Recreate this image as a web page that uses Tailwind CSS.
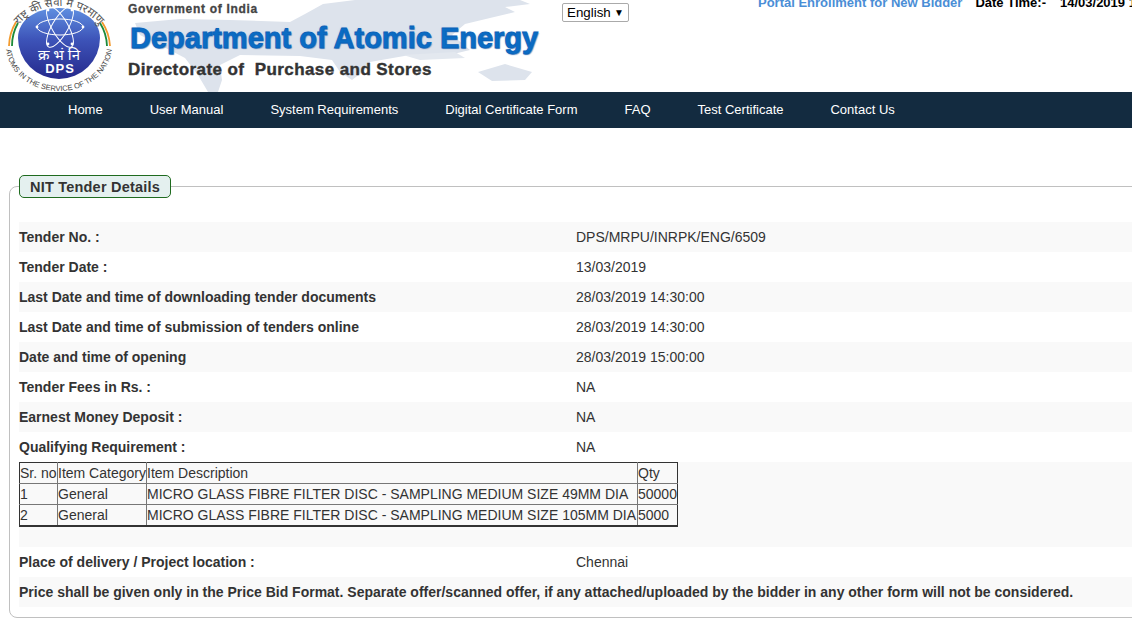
<!DOCTYPE html>
<html lang="en">
<head>
<meta charset="utf-8">
<title>NIT Tender Details</title>
<script src="https://cdn.jsdelivr.net/npm/@tailwindcss/browser@4"></script>
</head>
<body class="bg-white overflow-hidden h-[627px] w-[1132px] font-['Liberation_Sans',Arial,sans-serif] text-[14px] text-[#333]">
<header class="relative h-[92px] overflow-hidden flex items-start bg-white">
  <svg class="absolute left-[120px] top-0" width="440" height="92" viewBox="0 0 440 92" aria-hidden="true">
    <path d="M15 23 L60 19 L110 20 L170 22 L185 14 L203 4 L235 0 L400 0 L410 4 L385 7 L395 12 L370 18 L345 24 L332 35 L350 50 L325 56 L290 55 L250 62 L245 70 L232 80 L220 72 L212 60 L180 56 L120 55 L100 65 L102 80 L98 92 L88 92 L78 75 L65 58 L40 45 L20 35 Z" fill="#dde3ec"/>
    <path d="M283 55 L335 52 L345 58 L300 60 Z" fill="#e3e8ef"/>
    <path d="M358 72 L385 64 L412 72 L405 80 L372 81 Z" fill="#dde3ec"/>
  </svg>
  <svg class="relative shrink-0" width="120" height="92" viewBox="0 0 120 92">
    <defs>
      <linearGradient id="g" x1="0" y1="0" x2="0" y2="1"><stop offset="0" stop-color="#5f8fe0"/><stop offset=".45" stop-color="#3d53b8"/><stop offset="1" stop-color="#25298c"/></linearGradient>
      <path id="bot" d="M6 46 A53 45 0 0 0 112 46"/>
      <path id="top" d="M18 26 A52 52 0 0 1 100 26"/>
    </defs>
    <path d="M18 38 C18 20 36 8 59 8 C82 8 100 20 100 38 A41 41 0 0 1 18 38 Z" fill="url(#g)"/>
    <g fill="none" stroke="#fff" stroke-width="1">
      <ellipse cx="60" cy="27" rx="8" ry="23" transform="rotate(90 60 27)"/>
      <ellipse cx="60" cy="27" rx="8" ry="23" transform="rotate(30 60 27)"/>
      <ellipse cx="60" cy="27" rx="8" ry="23" transform="rotate(150 60 27)"/>
    </g>
    <g fill="#fff">
      <circle cx="37" cy="27" r="1.4"/><circle cx="83" cy="27" r="1.4"/>
      <circle cx="48" cy="44" r="1.4"/><circle cx="72" cy="44" r="1.4"/>
      <circle cx="48" cy="10" r="1.4"/><circle cx="72" cy="10" r="1.4"/>
    </g>
    <text x="59" y="60" text-anchor="middle" fill="#fff" font-size="15" font-family="'Noto Sans','DejaVu Sans',sans-serif">क्र भं नि</text>
    <text x="60" y="73" text-anchor="middle" fill="#fff" font-size="13" font-weight="700" letter-spacing="1" font-family="'Liberation Sans',sans-serif">DPS</text>
    <path d="M16 22 A48 48 0 0 0 9 46" fill="none" stroke="#f39a2d" stroke-width="1.8"/>
    <path d="M18 23 A46 46 0 0 0 12 46" fill="none" stroke="#1d8a3a" stroke-width="1.8"/>
    <path d="M102 22 A48 48 0 0 1 110 46" fill="none" stroke="#f39a2d" stroke-width="1.8"/>
    <path d="M100 23 A46 46 0 0 1 107 46" fill="none" stroke="#1d8a3a" stroke-width="1.8"/>
    <text font-size="7.5" fill="#444" font-family="'Liberation Sans',sans-serif"><textPath href="#bot" startOffset="50%" text-anchor="middle">ATOMS IN THE SERVICE OF THE NATION</textPath></text>
    <text font-size="11.5" fill="#555" font-family="'Noto Sans',sans-serif"><textPath href="#top" startOffset="50%" text-anchor="middle">राष्ट्र की सेवा में परमाणु</textPath></text>
  </svg>
  <div class="relative ml-[8px] w-[434px] shrink-0 font-bold">
    <div class="text-[12px] leading-[14px] mt-[2px] text-[#444] tracking-[0.7px] [-webkit-text-stroke:0.3px_#444]">Government of India</div>
    <div class="text-[29px] leading-[34px] mt-[5px] ml-[2px] text-[#0a6cc4] whitespace-nowrap [-webkit-text-stroke:0.8px_#0a62b8] [text-shadow:0_0_2px_#9cc0ea,1px_1px_1px_#6d8fbc]">Department of Atomic Energy</div>
    <div class="text-[17px] leading-[20px] mt-[5px] text-[#333] tracking-[0.42px] whitespace-nowrap [-webkit-text-stroke:0.4px_#333]">Directorate of&nbsp; Purchase and Stores</div>
  </div>
  <div class="relative mt-[3px] w-[67px] h-[19px] shrink-0 flex items-center justify-between pl-[4px] pr-[4px] bg-white border border-[#aaa] rounded-[2px] text-[13.33px] text-black">
    <span>English</span><span class="text-[10px] leading-none">▼</span>
  </div>
  <div class="relative ml-[129px] mt-[-4px] flex shrink-0 whitespace-nowrap font-bold text-[13px] leading-[14px] text-black">
    <span class="text-[#4a8ed6]">Portal Enrollment for New Bidder</span>
    <span class="ml-[13px]">Date Time:-</span>
    <span class="ml-[14px]">14/03/2019 1</span>
  </div>
</header>
<nav class="h-[36px] bg-[#132b40] flex items-center pl-[68px] gap-[47px] text-white text-[13px] whitespace-nowrap">
  <a>Home</a><a>User Manual</a><a>System Requirements</a><a>Digital Certificate Form</a><a>FAQ</a><a>Test Certificate</a><a>Contact Us</a>
</nav>
<main class="pt-[47px] pl-[9px]">
  <fieldset class="w-[1140px] h-[443px] border border-[#c0c0c0] rounded-[8px]">
    <legend class="ml-[9px] mr-[13px] h-[23px] w-[152px] pt-[2px] flex items-center justify-center bg-[#e4f0ef] border border-[#1f6b1f] rounded-[5px] text-[14.5px] font-bold tracking-[0.2px] text-[#333]">NIT Tender Details</legend>
    <div class="ml-[9px] mt-[24px]">
      <div class="flex h-[30px] items-center bg-[#f9f9f9]"><b class="w-[557px]">Tender No. :</b><span>DPS/MRPU/INRPK/ENG/6509</span></div>
      <div class="flex h-[30px] items-center"><b class="w-[557px]">Tender Date :</b><span>13/03/2019</span></div>
      <div class="flex h-[30px] items-center bg-[#f9f9f9]"><b class="w-[557px]">Last Date and time of downloading tender documents</b><span>28/03/2019 14:30:00</span></div>
      <div class="flex h-[30px] items-center"><b class="w-[557px]">Last Date and time of submission of tenders online</b><span>28/03/2019 14:30:00</span></div>
      <div class="flex h-[30px] items-center bg-[#f9f9f9]"><b class="w-[557px]">Date and time of opening</b><span>28/03/2019 15:00:00</span></div>
      <div class="flex h-[30px] items-center"><b class="w-[557px]">Tender Fees in Rs. :</b><span>NA</span></div>
      <div class="flex h-[30px] items-center bg-[#f9f9f9]"><b class="w-[557px]">Earnest Money Deposit :</b><span>NA</span></div>
      <div class="flex h-[30px] items-center"><b class="w-[557px]">Qualifying Requirement :</b><span>NA</span></div>
      <div class="h-[85px] bg-[#f9f9f9]">
        <table class="border-collapse border border-[#333] border-b-2 w-[658px] table-fixed text-[14px] leading-[20px] whitespace-nowrap">
          <colgroup><col class="w-[38px]"><col class="w-[89px]"><col class="w-[491px]"><col class="w-[40px]"></colgroup>
          <tr><td class="border border-[#333] border-r-[#777] border-b-[#777]">Sr. no</td><td class="border border-[#333] border-x-[#777] border-b-[#777]">Item Category</td><td class="border border-[#333] border-x-[#777] border-b-[#777]">Item Description</td><td class="border border-[#333] border-l-[#777] border-b-[#777]">Qty</td></tr>
          <tr><td class="border border-[#333] border-r-[#777] border-y-[#777]">1</td><td class="border border-[#777]">General</td><td class="border border-[#777]">MICRO GLASS FIBRE FILTER DISC - SAMPLING MEDIUM SIZE 49MM DIA</td><td class="border border-[#333] border-l-[#777] border-y-[#777]">50000</td></tr>
          <tr><td class="border border-[#333] border-r-[#777] border-t-[#777]">2</td><td class="border border-[#333] border-x-[#777] border-t-[#777]">General</td><td class="border border-[#333] border-x-[#777] border-t-[#777]">MICRO GLASS FIBRE FILTER DISC - SAMPLING MEDIUM SIZE 105MM DIA</td><td class="border border-[#333] border-l-[#777] border-t-[#777]">5000</td></tr>
        </table>
      </div>
      <div class="flex h-[30px] items-center"><b class="w-[557px]">Place of delivery / Project location :</b><span>Chennai</span></div>
      <div class="flex h-[30px] items-center bg-[#f9f9f9]"><b>Price shall be given only in the Price Bid Format. Separate offer/scanned offer, if any attached/uploaded by the bidder in any other form will not be considered.</b></div>
    </div>
  </fieldset>
</main>
</body>
</html>
